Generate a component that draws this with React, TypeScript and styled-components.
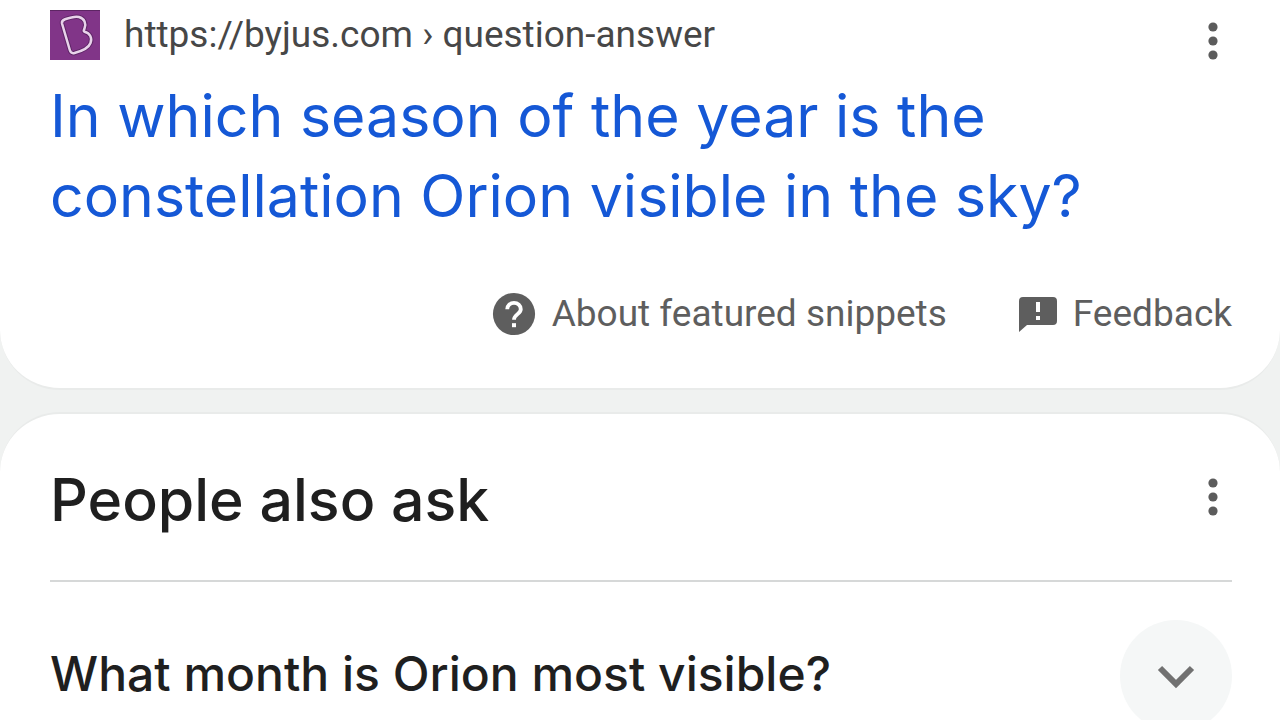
import React from "react";
import styled, { createGlobalStyle } from "styled-components";

const GlobalStyle = createGlobalStyle`
  * { box-sizing: border-box; }
  body { margin: 0; background: #f0f2f1; font-family: Roboto, "Liberation Sans", sans-serif; }
  h2, h3, button { margin: 0; font: inherit; }
`;

const headingFont = `Inter, "Liberation Sans", sans-serif`;

const Page = styled.main`
  display: flex;
  flex-direction: column;
  gap: 22px;
  height: 100vh;
  overflow: hidden;
`;

const Card = styled.section<{ $edge: "top" | "bottom" }>`
  flex: none;
  background: #fff;
  border: 0 solid #e9ebea;
  border-width: ${(p) => (p.$edge === "top" ? "2px 0 0" : "0 0 2px")};
  border-radius: ${(p) => (p.$edge === "top" ? "60px 60px 0 0" : "0 0 60px 60px")};
  padding: ${(p) => (p.$edge === "top" ? "52px 48px 32px 50px" : "10px 48px 52px 50px")};
`;

const Row = styled.div`
  display: flex;
  align-items: flex-start;
  justify-content: space-between;
`;

const Source = styled.a`
  display: flex;
  align-items: center;
  gap: 24px;
  color: #474747;
  font-size: 37px;
  line-height: 50px;
  text-decoration: none;
`;

const MenuButton = styled.button`
  display: flex;
  padding: 12px 0 0;
  border: 0;
  background: none;
  color: #5c5c5c;
`;

const ResultTitle = styled.h3`
  margin-top: 16px;
  font-family: ${headingFont};
  font-size: 59px;
  line-height: 80px;
  a { color: #1558d6; text-decoration: none; }
`;

const Footer = styled.footer`
  display: flex;
  justify-content: flex-end;
  gap: 72px;
  margin-top: 56px;
`;

const FooterLink = styled.a`
  display: flex;
  align-items: center;
  gap: 16px;
  color: #5e5e5e;
  font-size: 37px;
  line-height: 44px;
  text-decoration: none;
`;

const SectionTitle = styled.h2`
  font-family: ${headingFont};
  font-size: 59px;
  font-weight: 500;
  line-height: 68px;
  color: #1f1f1f;
`;

const Question = styled.div`
  display: flex;
  align-items: center;
  justify-content: space-between;
  margin-top: 46px;
  padding-top: 38px;
  border-top: 2px solid #d6d8d8;
`;

const QuestionText = styled.span`
  padding-bottom: 4px;
  color: #1f1f1f;
  font-family: ${headingFont};
  font-size: 48px;
  font-weight: 500;
  line-height: 60px;
`;

const ExpandButton = styled.button`
  display: flex;
  align-items: center;
  justify-content: center;
  width: 112px;
  height: 112px;
  padding: 0;
  border: 0;
  border-radius: 50%;
  background: #f5f7f7;
`;

const Dots = () => (
  <svg width="38" height="38" viewBox="0 0 38 38" fill="currentColor" aria-hidden="true">
    <circle cx="19" cy="5" r="4.600" />
    <circle cx="19" cy="19" r="4.600" />
    <circle cx="19" cy="33" r="4.600" />
  </svg>
);

const logoOutline =
  "M12 13.500C11.500 11 13 10 15 9.300C20 7.500 25 6 29 7C34.500 8.500 36.500 13.500 34.500 18.500C34 20 33 21 34.500 21.700C40 23 42.500 28 40.500 33C38.500 38.500 32 41 24.500 43C21.500 43.700 20.500 42.500 19.800 40Z";

const SiteLogo = () => (
  <svg width="50" height="50" viewBox="0 0 50 50" aria-hidden="true">
    <rect width="50" height="50" fill="#813588" />
    <path d="M0 .5h50" stroke="#5d2563" />
    <g fill="none" strokeLinejoin="round">
      <path d={logoOutline} stroke="#5f2667" strokeWidth="4.500" />
      <path d={logoOutline} stroke="#e8d3ea" strokeWidth="2.500" />
    </g>
  </svg>
);

const HelpIcon = () => (
  <svg width="44" height="44" viewBox="0 0 24 24" fill="#5e5e5e" aria-hidden="true">
    <circle cx="12" cy="12" r="11.500" />
    <path
      d="M8.300 9.400a3.700 3.500 0 0 1 7.400 0c0 2.500-3.700 2.900-3.700 5.700"
      fill="none"
      stroke="#fff"
      strokeWidth="2.100"
    />
    <rect x="10.900" y="17" width="2.200" height="2.200" fill="#fff" />
  </svg>
);

const FeedbackIcon = () => (
  <svg width="38" height="38" viewBox="0 0 38 38" fill="#5e5e5e" aria-hidden="true">
    <path d="M4 2h30a4 4 0 0 1 4 4v20a4 4 0 0 1-4 4H8l-8 7V6a4 4 0 0 1 4-4Z" />
    <path d="M17 7h4v10h-4zM17 21h4v4h-4z" fill="#fff" />
  </svg>
);

const Chevron = () => (
  <svg width="40" height="40" viewBox="0 0 40 40" aria-hidden="true">
    <path d="M4 12l16 16 16-16" fill="none" stroke="#717171" strokeWidth="6" />
  </svg>
);

export default function App() {
  return (
    <>
      <GlobalStyle />
      <Page>
        <Card $edge="bottom">
          <Row>
            <Source href="#source">
              <SiteLogo />
              <span>https://byjus.com › question-answer</span>
            </Source>
            <MenuButton aria-label="About this result">
              <Dots />
            </MenuButton>
          </Row>
          <ResultTitle>
            <a href="#source">
              In which season of the year is the
              <br />
              constellation Orion visible in the sky?
            </a>
          </ResultTitle>
          <Footer>
            <FooterLink href="#about">
              <HelpIcon />
              <span>About featured snippets</span>
            </FooterLink>
            <FooterLink href="#feedback">
              <FeedbackIcon />
              <span>Feedback</span>
            </FooterLink>
          </Footer>
        </Card>
        <Card $edge="top">
          <Row>
            <SectionTitle>People also ask</SectionTitle>
            <MenuButton aria-label="About these questions">
              <Dots />
            </MenuButton>
          </Row>
          <Question>
            <QuestionText id="question">What month is Orion most visible?</QuestionText>
            <ExpandButton aria-labelledby="question" aria-expanded="false">
              <Chevron />
            </ExpandButton>
          </Question>
        </Card>
      </Page>
    </>
  );
}
